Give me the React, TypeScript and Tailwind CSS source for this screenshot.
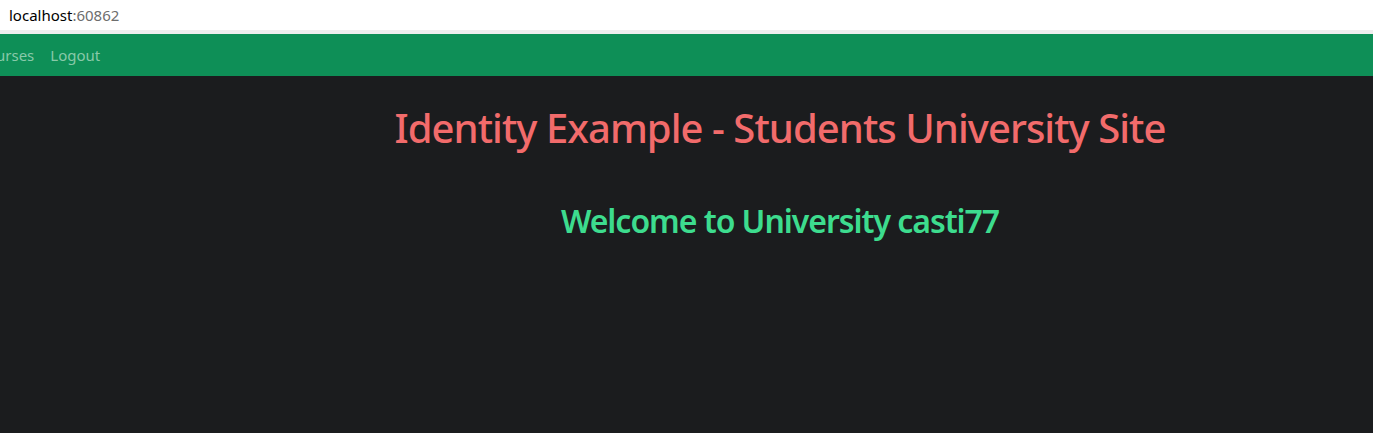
import React from "react";

const App: React.FC = () => {
  return (
    <div className="w-[1373px] h-[433px] overflow-hidden bg-[#1b1c1e] font-['Noto_Sans',sans-serif]">
      {/* barra de endereço */}
      <div className="h-[30px] bg-white flex items-center pl-[9px] text-[15px] leading-none">
        <span className="text-black">localhost</span>
        <span className="text-[#6d6d6d]">:60862</span>
      </div>
      <div className="h-[4px] bg-[#eeeeee]" />

      {/* navbar */}
      <nav className="h-[42px] bg-[#0e8f57] flex items-center text-[15px] text-[#88c9a9]">
        <span className="ml-[-4px]">urses</span>
        <span className="ml-[16px]">Logout</span>
      </nav>

      {/* conteúdo */}
      <main className="w-[1560px] text-center pt-[28px]">
        <h1 className="text-[40px] leading-[1.2] font-medium tracking-[-0.95px] text-[#f26b6b]">
          Identity Example - Students University Site
        </h1>
        <h2 className="mt-[50px] text-[32px] leading-[1.2] font-semibold tracking-[-1.05px] text-[#3ddc8e]">
          Welcome to University casti77
        </h2>
      </main>
    </div>
  );
};

export default App;
